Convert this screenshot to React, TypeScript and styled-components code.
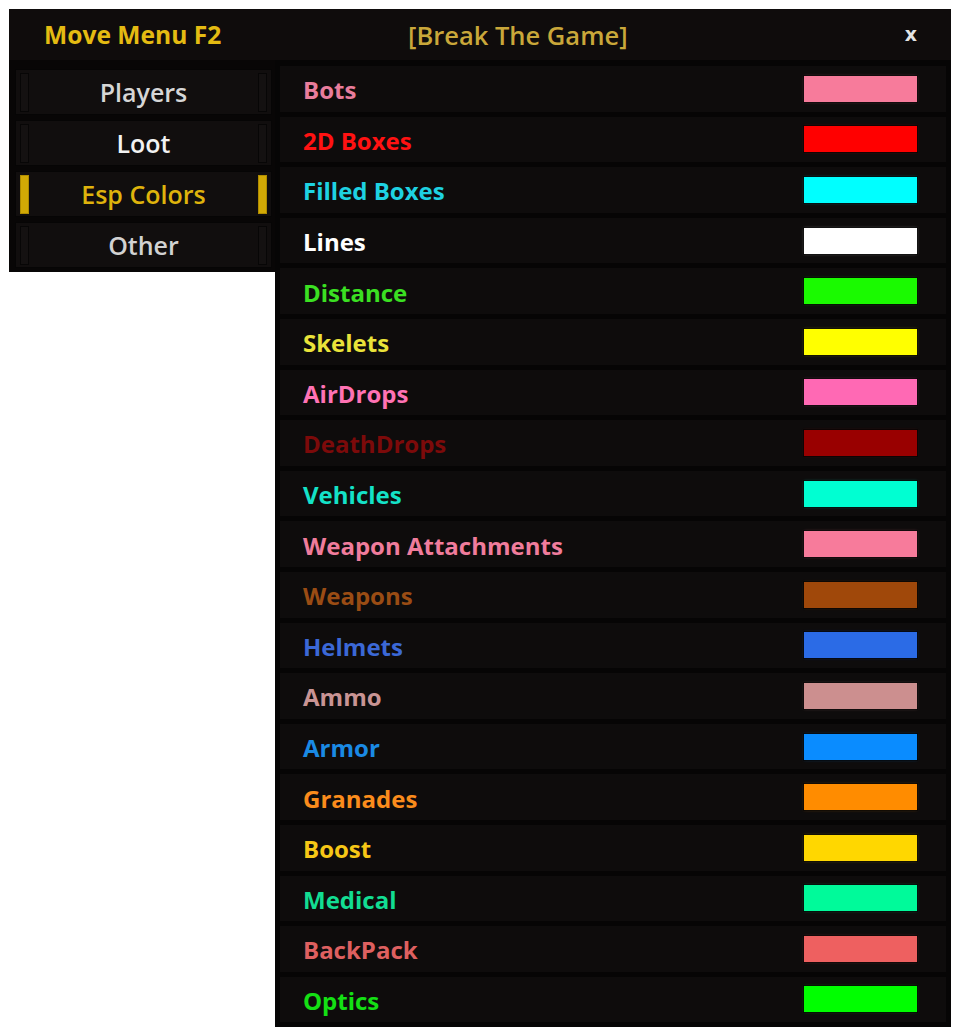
import React, { FC } from 'react';
import styled, { createGlobalStyle } from 'styled-components';

const GlobalStyle = createGlobalStyle`
  body {
    margin: 0;
    background: #ffffff;
    font-family: 'Open Sans', 'DejaVu Sans', sans-serif;
  }
`;

const Window = styled.div`
  margin: 9px 0 0 9px;
  width: 942px;
`;

const Header = styled.div`
  display: flex;
  align-items: center;
  height: 51px;
  padding: 0 34px 0 35px;
  background: #0f0c0c;
  box-sizing: border-box;
`;

const MoveTitle = styled.div`
  width: 364px;
  color: #e4bb12;
  font-size: 24.6px;
  font-weight: 700;
`;

const GameTitle = styled.div`
  flex: 1;
  color: #c9a73a;
  font-size: 25.5px;
  font-weight: 600;
`;

const Close = styled.div`
  color: #e4e4e4;
  font-family: 'DejaVu Sans', sans-serif;
  font-size: 19px;
  font-weight: 700;
  padding-bottom: 2px;
`;

const Body = styled.div`
  display: flex;
  align-items: flex-start;
`;

const Sidebar = styled.div`
  display: flex;
  flex-direction: column;
  gap: 5px;
  width: 266px;
  padding: 9px 3px 4px 6px;
  box-sizing: border-box;
  background: #080606;
`;

const NavButton = styled.div<{ $color: string }>`
  display: flex;
  align-items: center;
  justify-content: space-between;
  height: 46px;
  padding: 0 4px;
  box-sizing: border-box;
  background: #110e0e;
  border: 1px solid #060505;
  color: ${(p) => p.$color};
  font-size: 25px;
  font-weight: 600;
`;

const Marker = styled.div<{ $active?: boolean }>`
  width: 9px;
  height: 39px;
  box-sizing: border-box;
  background: ${(p) => (p.$active ? '#d2a905' : '#141111')};
  border: 1px solid ${(p) => (p.$active ? '#b08c00' : '#070606')};
`;

const NavLabel = styled.span`
  flex: 1;
  text-align: center;
`;

const Panel = styled.div`
  display: flex;
  flex-direction: column;
  gap: 5px;
  width: 676px;
  padding: 6px 5px 5px 5px;
  box-sizing: border-box;
  background: #060505;
`;

const Row = styled.div`
  display: flex;
  align-items: center;
  justify-content: space-between;
  height: 45.6px;
  padding: 0 29px 0 23px;
  box-sizing: border-box;
  background: #0e0c0c;
`;

const Label = styled.span<{ $color: string }>`
  color: ${(p) => p.$color};
  font-size: 24px;
  font-weight: 700;
  padding-top: 2px;
`;

const Swatch = styled.div<{ $color: string }>`
  width: 113px;
  height: 26px;
  background: ${(p) => p.$color};
  box-shadow: 0 0 0 1px rgba(0, 0, 0, 0.55), 0 0 3px ${(p) => p.$color}55;
`;

const tabs = [
    { name: 'Players', color: '#d6d6d6' },
    { name: 'Loot', color: '#f2f2f2' },
    { name: 'Esp Colors', color: '#dfb30c', active: true },
    { name: 'Other', color: '#d2d2d2' },
];

const items = [
    { name: 'Bots', text: '#e87d9c', swatch: '#f77b9b' },
    { name: '2D Boxes', text: '#ff1212', swatch: '#ff0000' },
    { name: 'Filled Boxes', text: '#1ed2e2', swatch: '#00ffff' },
    { name: 'Lines', text: '#ffffff', swatch: '#ffffff' },
    { name: 'Distance', text: '#3be022', swatch: '#1afa00' },
    { name: 'Skelets', text: '#eae33a', swatch: '#ffff00' },
    { name: 'AirDrops', text: '#ff72b4', swatch: '#ff69b4' },
    { name: 'DeathDrops', text: '#7c0a0a', swatch: '#990000' },
    { name: 'Vehicles', text: '#14e2c8', swatch: '#00ffd2' },
    { name: 'Weapon Attachments', text: '#f07c9c', swatch: '#f77b9b' },
    { name: 'Weapons', text: '#9a4c14', swatch: '#a0480a' },
    { name: 'Helmets', text: '#3b68d6', swatch: '#2b6be6' },
    { name: 'Ammo', text: '#c99494', swatch: '#cc8f8f' },
    { name: 'Armor', text: '#1a8ae4', swatch: '#0a8cff' },
    { name: 'Granades', text: '#fb8c1c', swatch: '#ff8c00' },
    { name: 'Boost', text: '#f6c716', swatch: '#ffd700' },
    { name: 'Medical', text: '#12dd92', swatch: '#00fa9a' },
    { name: 'BackPack', text: '#de6060', swatch: '#ee6060' },
    { name: 'Optics', text: '#14e014', swatch: '#00ff00' },
];

export const App: FC = () => {
    return (
        <Window>
            <GlobalStyle />
            <Header>
                <MoveTitle>Move Menu F2</MoveTitle>
                <GameTitle>[Break The Game]</GameTitle>
                <Close>x</Close>
            </Header>
            <Body>
                <Sidebar>
                    {tabs.map((t) => (
                        <NavButton key={t.name} $color={t.color}>
                            <Marker $active={t.active} />
                            <NavLabel>{t.name}</NavLabel>
                            <Marker $active={t.active} />
                        </NavButton>
                    ))}
                </Sidebar>
                <Panel>
                    {items.map((i) => (
                        <Row key={i.name}>
                            <Label $color={i.text}>{i.name}</Label>
                            <Swatch $color={i.swatch} />
                        </Row>
                    ))}
                </Panel>
            </Body>
        </Window>
    );
};

export default App;
